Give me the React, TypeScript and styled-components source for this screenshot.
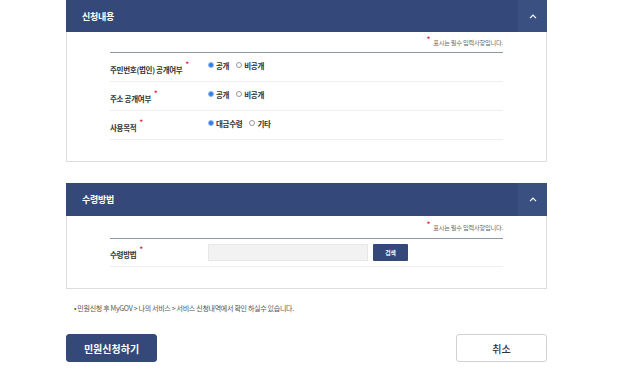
import React from "react";
import styled, { createGlobalStyle } from "styled-components";

const GlobalStyle = createGlobalStyle`
  html, body {
    margin: 0;
    padding: 0;
    background: #fff;
  }
  body {
    font-family: "Noto Sans CJK KR", "Noto Sans", sans-serif;
    color: #333;
  }
`;

const NAVY = "#34497a";

const Page = styled.div`
  width: 635px;
  height: 379px;
  overflow: hidden;
  padding-left: 66px;
  box-sizing: border-box;
`;

const Column = styled.div`
  width: 481px;
  display: flex;
  flex-direction: column;
`;

const Panel = styled.section<{ $gap?: number }>`
  margin-top: ${({ $gap }) => $gap ?? 0}px;
  display: flex;
  flex-direction: column;
`;

const PanelHead = styled.header<{ $h: number }>`
  height: ${({ $h }) => $h}px;
  background: ${NAVY};
  display: flex;
  align-items: center;
  justify-content: space-between;
`;

const PanelTitle = styled.h2`
  margin: 0 0 0 16px;
  font-size: 9px;
  font-weight: 700;
  color: #fff;
  letter-spacing: -0.3px;
`;

const Toggle = styled.button`
  width: 29px;
  height: 100%;
  border: 0;
  padding: 0;
  background: #3a5081;
  display: flex;
  align-items: center;
  justify-content: center;
`;

const PanelBody = styled.div`
  border: 1px solid #dcdde2;
  border-top: 0;
  padding: 0 43px 21px 43px;
`;

const Required = styled.p<{ $h: number }>`
  margin: 0;
  height: ${({ $h }) => $h}px;
  display: flex;
  align-items: center;
  justify-content: flex-end;
  font-size: 6.2px;
  color: #666;
  letter-spacing: -0.2px;
`;

const Star = styled.span`
  color: #e0203a;
  font-size: 7px;
  font-weight: 700;
  line-height: 1;
  position: relative;
  top: -3px;
  margin-right: 3px;
`;

const Table = styled.div`
  border-top: 1px solid #8f97ab;
`;

const Row = styled.div<{ $h: number }>`
  box-sizing: border-box;
  height: ${({ $h }) => $h}px;
  border-bottom: 1px solid #eceef2;
  display: flex;
  align-items: center;
`;

const Label = styled.div`
  width: 98px;
  font-size: 7.5px;
  font-weight: 700;
  color: #333;
  letter-spacing: -0.3px;
  padding-top: 4px;
  white-space: nowrap;
`;

const LabelStar = styled.span`
  color: #e0203a;
  font-size: 7px;
  position: relative;
  top: -6px;
  margin-left: 3px;
`;

const Options = styled.div`
  display: flex;
  align-items: center;
  gap: 7px;
  margin-top: -4px;
`;

const Option = styled.label`
  display: flex;
  align-items: center;
  gap: 2px;
  font-size: 7.5px;
  font-weight: 700;
  color: #333;
  letter-spacing: -0.3px;
`;

const Dot = styled.span<{ $on?: boolean }>`
  width: 6px;
  height: 6px;
  border-radius: 50%;
  box-sizing: border-box;
  border: 1px solid ${({ $on }) => ($on ? "#8fb6ee" : "#999")};
  background: ${({ $on }) => ($on ? "#2e7ee8" : "#fff")};
`;

const Field = styled.div`
  height: 17px;
  width: 160px;
  background: #f2f2f3;
  border: 1px solid #e6e7ea;
  box-sizing: border-box;
`;

const SmallButton = styled.button`
  margin-left: 5px;
  width: 35px;
  height: 17px;
  border: 0;
  border-radius: 1px;
  background: ${NAVY};
  color: #fff;
  font-family: inherit;
  font-size: 5.8px;
  font-weight: 700;
  padding: 0;
`;

const Notice = styled.p`
  margin: 14px 0 0 8px;
  font-size: 7px;
  color: #555;
  letter-spacing: -0.3px;
`;

const Actions = styled.div`
  margin-top: 21px;
  display: flex;
  justify-content: space-between;
`;

const ActionButton = styled.button<{ $primary?: boolean }>`
  width: 91px;
  height: 28px;
  border-radius: 3px;
  font-family: inherit;
  font-size: 10px;
  font-weight: ${({ $primary }) => ($primary ? 700 : 500)};
  color: ${({ $primary }) => ($primary ? "#fff" : "#333")};
  background: ${({ $primary }) => ($primary ? NAVY : "#fff")};
  border: 1px solid ${({ $primary }) => ($primary ? NAVY : "#cfd1d6")};
  padding: 0;
`;

const Chevron = () => (
  <svg width="8" height="5" viewBox="0 0 8 5">
    <path d="M1 4.2 L4 1.2 L7 4.2" fill="none" stroke="#fff" strokeWidth="1.2" />
  </svg>
);

const Head = ({ title, h }: { title: string; h: number }) => (
  <PanelHead $h={h}>
    <PanelTitle>{title}</PanelTitle>
    <Toggle aria-label="접기">
      <Chevron />
    </Toggle>
  </PanelHead>
);

const Note = ({ h }: { h: number }) => (
  <Required $h={h}>
    <Star>*</Star>표시는 필수 입력사항입니다.
  </Required>
);

const choices = [
  { label: "주민번호(법인) 공개여부", opts: ["공개", "비공개"] },
  { label: "주소 공개여부", opts: ["공개", "비공개"] },
  { label: "사용목적", opts: ["대금수령", "기타"] },
];

export default function App() {
  return (
    <Page>
      <GlobalStyle />
      <Column>
        <Panel>
          <Head title="신청내용" h={32} />
          <PanelBody>
            <Note h={20} />
            <Table>
              {choices.map((c) => (
                <Row key={c.label} $h={29}>
                  <Label>
                    {c.label}
                    <LabelStar>*</LabelStar>
                  </Label>
                  <Options>
                    {c.opts.map((o, i) => (
                      <Option key={o}>
                        <Dot $on={i === 0} />
                        {o}
                      </Option>
                    ))}
                  </Options>
                </Row>
              ))}
            </Table>
          </PanelBody>
        </Panel>

        <Panel $gap={21}>
          <Head title="수령방법" h={33} />
          <PanelBody>
            <Note h={22} />
            <Table>
              <Row $h={28}>
                <Label>
                  수령방법
                  <LabelStar>*</LabelStar>
                </Label>
                <Field />
                <SmallButton>검색</SmallButton>
              </Row>
            </Table>
          </PanelBody>
        </Panel>

        <Notice>• 민원신청 후 MyGOV &gt; 나의 서비스 &gt; 서비스 신청내역에서 확인 하실수 있습니다.</Notice>

        <Actions>
          <ActionButton $primary>민원신청하기</ActionButton>
          <ActionButton>취소</ActionButton>
        </Actions>
      </Column>
    </Page>
  );
}
